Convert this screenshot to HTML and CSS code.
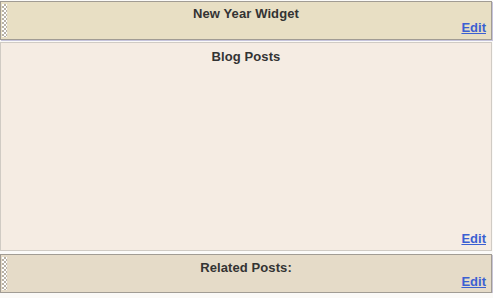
FILE: index.html
```html
<!DOCTYPE html>
<html>
<head>
<meta charset="utf-8">
<link rel="stylesheet" href="styles.css">
</head>
<body>
<div class="layout">
  <div class="widget widget-draggable widget-top">
    <div class="widget-title">New Year Widget</div>
    <a class="edit-link" href="#">Edit</a>
  </div>
  <div class="widget widget-main">
    <div class="widget-title">Blog Posts</div>
    <a class="edit-link" href="#">Edit</a>
  </div>
  <div class="widget widget-draggable widget-bottom">
    <div class="widget-title">Related Posts:</div>
    <a class="edit-link" href="#">Edit</a>
  </div>
</div>
</body>
</html>
```

FILE: styles.css
```css
html, body {
  margin: 0;
  padding: 0;
  background: #fbfaf8;
}
body {
  font-family: "Liberation Sans", Arial, sans-serif;
  font-size: 13px;
  line-height: 15px;
}
.layout {
  width: 492px;
  padding-top: 1px;
  display: flex;
  flex-direction: column;
}
.widget {
  position: relative;
  display: grid;
  box-sizing: border-box;
  padding: 4px 5px 4px 5px;
}
.widget > * {
  grid-area: 1 / 1;
}
.widget-title {
  justify-self: center;
  align-self: start;
  font-weight: bold;
  color: #333333;
  letter-spacing: 0.1px;
}
.edit-link {
  justify-self: end;
  align-self: end;
  font-weight: bold;
  color: #3b60d2;
  text-decoration: underline;
}
.widget-top {
  height: 39px;
  background: #e8dfc4;
  border: 1px solid #a19c94;
  box-shadow: 1px 1px 0 #c7c5dc;
}
.widget-main {
  margin-top: 2px;
  height: 209px;
  padding-top: 6px;
  padding-bottom: 4px;
  background: #f5ece3;
  border: 1px solid #d0cbc4;
}
.widget-bottom {
  margin-top: 3px;
  height: 39px;
  padding-top: 5px;
  padding-bottom: 3px;
  background: #e5dbc8;
  border: 1px solid #a19c94;
  box-shadow: 1px 1px 0 #c9c6d6;
}
.widget-draggable::before {
  content: "";
  position: absolute;
  left: 1px;
  top: 2px;
  bottom: 2px;
  width: 5px;
  background-color: #ffffff;
  background-image: conic-gradient(#b7b1a6 25%, transparent 0 50%, #b7b1a6 0 75%, transparent 0);
  background-size: 4px 4px;
}
```
